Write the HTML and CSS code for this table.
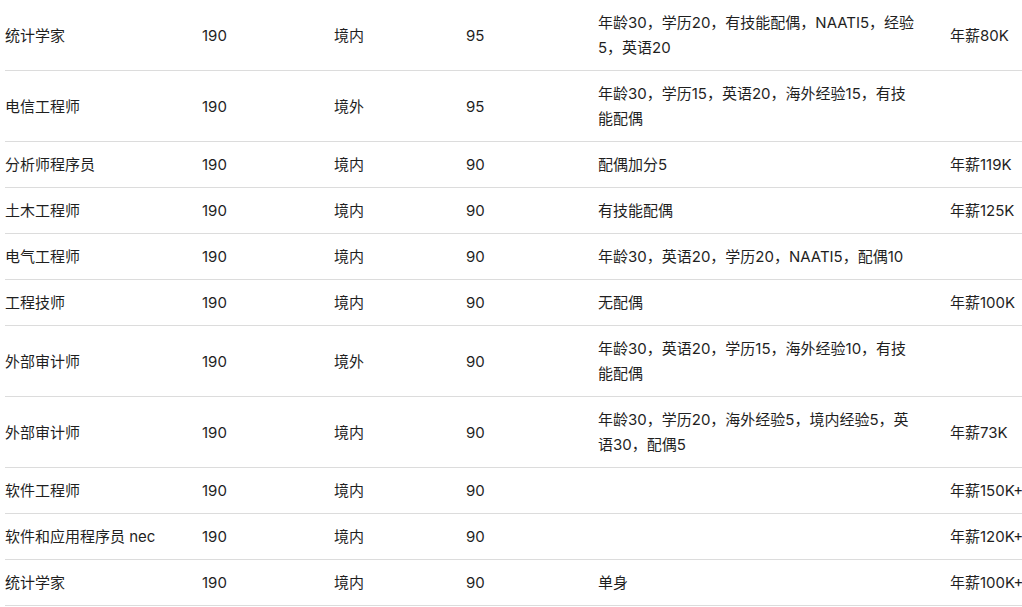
FILE: index.html
```html
<!DOCTYPE html>
<html lang="zh">
<head>
<meta charset="utf-8">
<title>职业列表</title>
<link rel="stylesheet" href="styles.css">
</head>
<body>
<table class="occ-table">
  <colgroup>
    <col class="c-name"><col class="c-visa"><col class="c-loc"><col class="c-score"><col class="c-note"><col class="c-pay">
  </colgroup>
  <tbody>
    <tr><td>统计学家</td><td>190</td><td>境内</td><td>95</td><td>年龄30，学历20，有技能配偶，NAATI5，经验5，英语20</td><td>年薪80K</td></tr>
    <tr><td>电信工程师</td><td>190</td><td>境外</td><td>95</td><td>年龄30，学历15，英语20，海外经验15，有技能配偶</td><td></td></tr>
    <tr><td>分析师程序员</td><td>190</td><td>境内</td><td>90</td><td>配偶加分5</td><td>年薪119K</td></tr>
    <tr><td>土木工程师</td><td>190</td><td>境内</td><td>90</td><td>有技能配偶</td><td>年薪125K</td></tr>
    <tr><td>电气工程师</td><td>190</td><td>境内</td><td>90</td><td>年龄30，英语20，学历20，NAATI5，配偶10</td><td></td></tr>
    <tr><td>工程技师</td><td>190</td><td>境内</td><td>90</td><td>无配偶</td><td>年薪100K</td></tr>
    <tr><td>外部审计师</td><td>190</td><td>境外</td><td>90</td><td>年龄30，英语20，学历15，海外经验10，有技能配偶</td><td></td></tr>
    <tr><td>外部审计师</td><td>190</td><td>境内</td><td>90</td><td>年龄30，学历20，海外经验5，境内经验5，英语30，配偶5</td><td>年薪73K</td></tr>
    <tr><td>软件工程师</td><td>190</td><td>境内</td><td>90</td><td></td><td>年薪150K+</td></tr>
    <tr><td>软件和应用程序员 nec</td><td>190</td><td>境内</td><td>90</td><td></td><td>年薪120K+</td></tr>
    <tr><td>统计学家</td><td>190</td><td>境内</td><td>90</td><td>单身</td><td>年薪100K+</td></tr>
  </tbody>
</table>
</body>
</html>
```

FILE: styles.css
```css
html, body {
  margin: 0;
  padding: 0;
  overflow: hidden;
  background: #ffffff;
}

body {
  font-family: Inter, "Noto Sans CJK SC", sans-serif;
  font-size: 15px;
  line-height: 25px;
  color: #1f1f1f;
}

.occ-table {
  border-collapse: collapse;
  table-layout: fixed;
  width: 1037px;
  margin: 0 0 0 5px;
}

.c-name { width: 197px; }
.c-visa { width: 132px; }
.c-loc { width: 132px; }
.c-score { width: 132px; }
.c-note { width: 352px; }
.c-pay { width: 92px; }

.occ-table td {
  padding: 10px 0;
  vertical-align: middle;
  border-bottom: 1px solid #dcdcdc;
  text-align: left;
  white-space: normal;
}

.occ-table td:nth-child(5) {
  padding-right: 34px;
}

.occ-table td:nth-child(6) {
  white-space: nowrap;
}
```
